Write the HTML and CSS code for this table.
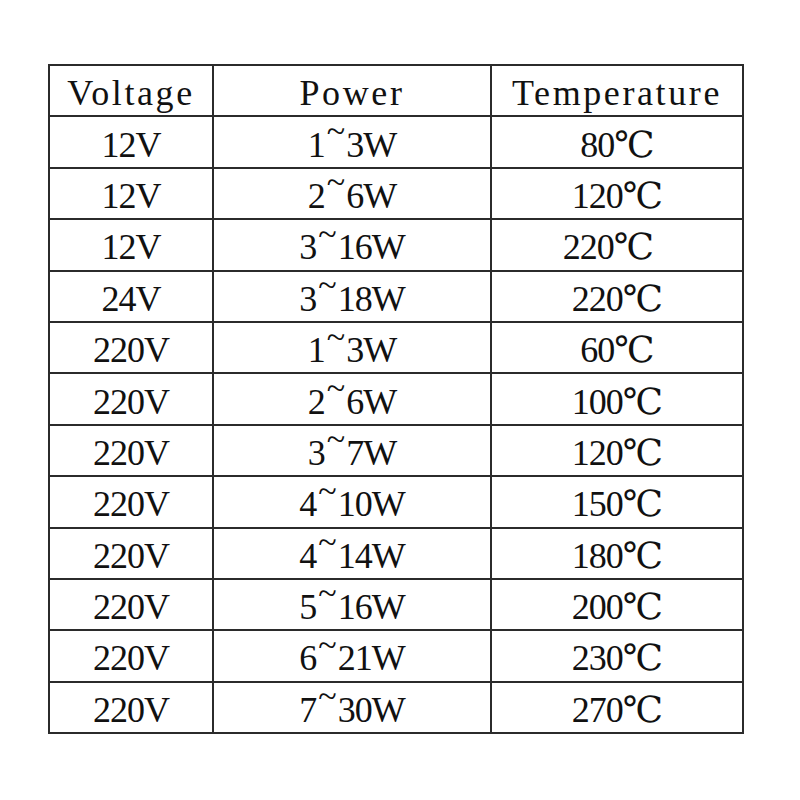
FILE: index.html
```html
<!DOCTYPE html>
<html>
<head>
<meta charset="utf-8">
<link rel="stylesheet" href="styles.css">
</head>
<body>
<div class="wrap">
<table class="spec">
  <colgroup><col class="c1"><col class="c2"><col class="c3"></colgroup>
  <tr class="head"><td>Voltage</td><td>Power</td><td>Temperature</td></tr>
  <tr><td>12V</td><td>1<span class="tilde">~</span>3W</td><td>80℃</td></tr>
  <tr><td>12V</td><td>2<span class="tilde">~</span>6W</td><td>120℃</td></tr>
  <tr><td>12V</td><td>3<span class="tilde">~</span>16W</td><td class="shift">220℃</td></tr>
  <tr><td>24V</td><td>3<span class="tilde">~</span>18W</td><td>220℃</td></tr>
  <tr><td>220V</td><td>1<span class="tilde">~</span>3W</td><td>60℃</td></tr>
  <tr><td>220V</td><td>2<span class="tilde">~</span>6W</td><td>100℃</td></tr>
  <tr><td>220V</td><td>3<span class="tilde">~</span>7W</td><td>120℃</td></tr>
  <tr><td>220V</td><td>4<span class="tilde">~</span>10W</td><td>150℃</td></tr>
  <tr><td>220V</td><td>4<span class="tilde">~</span>14W</td><td>180℃</td></tr>
  <tr><td>220V</td><td>5<span class="tilde">~</span>16W</td><td>200℃</td></tr>
  <tr><td>220V</td><td>6<span class="tilde">~</span>21W</td><td>230℃</td></tr>
  <tr><td>220V</td><td>7<span class="tilde">~</span>30W</td><td>270℃</td></tr>
</table>
</div>
</body>
</html>
```
FILE: styles.css
```css
html, body {
  margin: 0;
  padding: 0;
  background: #ffffff;
}
.wrap {
  padding: 64px 0 0 48px;
}
.spec {
  border-collapse: collapse;
  table-layout: fixed;
  width: 694px;
  font-family: "Liberation Serif", "DejaVu Serif", "Noto Sans CJK SC", serif;
  font-size: 36px;
  color: #111111;
}
.c1 { width: 164px; }
.c2 { width: 278px; }
.c3 { width: 252px; }
.spec td {
  border: 2px solid #2b2b2b;
  height: 51.4px;
  padding: 5px 0 0 0;
  box-sizing: border-box;
  text-align: center;
  line-height: 1;
  letter-spacing: -1px;
  white-space: nowrap;
}
.spec .head td {
  letter-spacing: 2.6px;
}
.tilde {
  vertical-align: 0.43em;
  line-height: 0;
  font-size: 34px;
  margin: 0 2px;
}
.spec td.shift {
  padding-right: 18px;
}
```
